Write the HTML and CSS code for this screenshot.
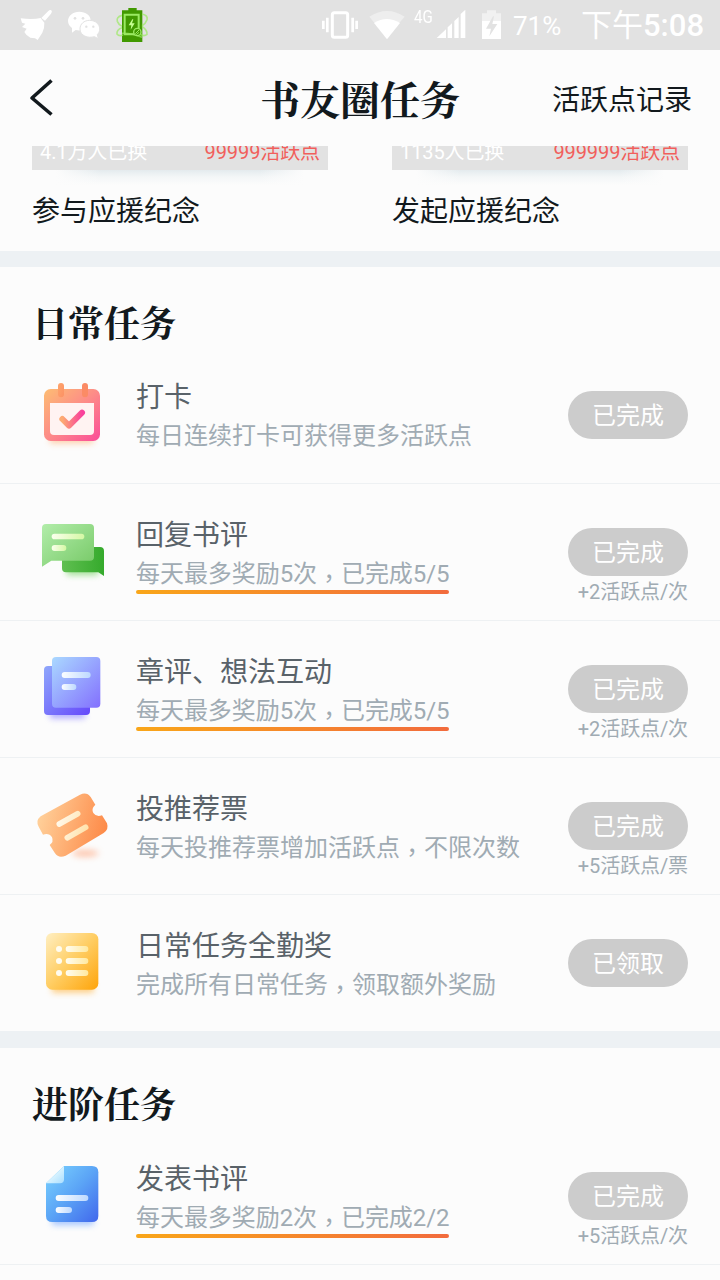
FILE: index.html
```html
<!DOCTYPE html>
<html lang="zh-CN">
<head>
<meta charset="utf-8">
<title>书友圈任务</title>
<link rel="stylesheet" href="styles.css">
</head>
<body>
<div class="status">
  <svg class="status-left" width="150" height="50" viewBox="0 0 450 150">
    <path d="M124 54L145 33q5-5 9-2q4 4-1 10L135 62z" fill="#fff"/>
    <path d="M62 55q36 5 60-1l11 14q1 16-6 30l-14 22-8-5-14-2-12-9-6-8 7-10-14-5 10-10-10-3z" fill="#fff"/>
    <g fill="#fff"><path d="M238 35c-19 0-34 12-34 28 0 9 5 16 12 21v14l11-8c21 5 45-6 45-28 0-16-15-27-34-27z"/><path d="M269 61c-17 0-29 11-29 26 0 20 24 29 43 23l12 6-3-12c16-15 5-43-23-43z" stroke="#e2e2e2" stroke-width="3"/></g>
    <g fill="#e2e2e2"><circle cx="225" cy="55" r="4"/><circle cx="249" cy="55" r="4"/><circle cx="259" cy="80" r="3.500"/><circle cx="280" cy="80" r="3.500"/></g>
    <path d="M385 24h25v7h17v95h-61V31h19z" fill="#419900"/>
    <g fill="none" stroke="#9bea62"><path d="M374 44h42v59h-42z" stroke-width="6"/><path d="M366 46q-18 5-14 18 4 10 14 15M366 83q-17 6-15 19 6 8 18 3" stroke-width="5" opacity=".7"/><path d="M426 42q19 4 15 17-4 12-15 18M426 79q17 12 15 24-9 8-22-1M366 100q25-2 60 12" stroke-width="5" opacity=".7"/></g>
    <path d="M397 58l-11 18h8l-2 13 12-19h-8l4-12z" fill="#c5ff91"/>
    <circle cx="412" cy="96" r="11" fill="#419900" stroke="#9bea62" stroke-width="4"/><path d="M406 101l11-11m-8 14l8-7" stroke="#9bea62" stroke-width="3"/>
  </svg>
  <svg class="status-right" width="210" height="50" viewBox="0 0 630 150">
    <rect x="97" y="38" width="46" height="74" rx="6" fill="none" stroke="#fff" stroke-width="9"/>
    <path d="M70 62v25M82 53v44M158 53v44M170 62v25" stroke="#fff" stroke-width="8"/>
    <path d="M208 50q53-34 106 0l-17 20q-36-20-73 0z" fill="#eee"/><path d="M222 69q38-24 78 0l-39 49z" fill="#fff"/>
    <g fill="#fff"><path d="M410 114l28-26v26z"/><path d="M443 82l13-12v44h-13zM463 63l13-12v63h-13zM482 42l14-13v85h-14z"/></g>
    <path d="M546 40h15v-9h27v9h15v23h-57z" fill="#f1f1f1"/><path d="M546 63h57v54h-57z" fill="#fff"/><path d="M579 49l-21 37h15l-5 23 24-37h-15l5-23z" fill="#e2e2e2"/>
  </svg>
  <span class="network">4G</span>
  <span class="battery">71%</span>
  <span class="clock">下午<b>5:08</b></span>
</div>

<header class="topbar">
  <svg class="back" width="30" height="40" viewBox="0 0 30 40"><path d="M26.500 2.500L7 20l19.500 16.500" fill="none" stroke="#12191d" stroke-width="3.600" stroke-linecap="butt" stroke-linejoin="round"/></svg>
  <h1>书友圈任务</h1>
  <span class="record">活跃点记录</span>
</header>

<section class="promos">
  <div class="promo"><div class="cover"><span>4.1万人已换</span><span class="price">99999活跃点</span></div><div class="shade"></div><p>参与应援纪念</p></div>
  <div class="promo"><div class="cover"><span>1135人已换</span><span class="price">999999活跃点</span></div><div class="shade"></div><p>发起应援纪念</p></div>
</section>

<section class="tasks">
  <h2>日常任务</h2>
  <div class="task first">
    <svg class="icon" viewBox="0 0 300 300">
      <defs>
        <filter id="soft" x="-30%" y="-100%" width="160%" height="300%"><feGaussianBlur stdDeviation="9"/></filter>
        <linearGradient id="cal" x1="0" y1="0" x2="1" y2="1"><stop stop-color="#fdbd72"/><stop offset=".5" stop-color="#fd8b88"/><stop offset="1" stop-color="#fb4b99"/></linearGradient>
        <linearGradient id="tick"><stop stop-color="#fdaa72"/><stop offset="1" stop-color="#f9409b"/></linearGradient>
        <linearGradient id="ring" x1="0" y1="0" x2="1" y2="1"><stop stop-color="#ffa56c"/><stop offset="1" stop-color="#fb9165"/></linearGradient>
      </defs>
      <g transform="translate(0 -6)">
        <rect x="90" y="205" width="130" height="30" fill="#ffb072" opacity=".6" filter="url(#soft)"/>
        <rect x="72" y="72" width="168" height="156" rx="20" fill="url(#cal)"/>
        <path d="M90 114h132v84q0 12-12 12H102q-12 0-12-12z" fill="#fff3f2"/>
        <rect x="114" y="54" width="18" height="43" rx="9" fill="url(#ring)"/><rect x="186" y="54" width="18" height="43" rx="9" fill="#fb8b65"/>
        <path d="M127 162l20 20 39-39" fill="none" stroke="url(#tick)" stroke-width="18" stroke-linecap="round" stroke-linejoin="round"/>
      </g>
    </svg>
    <div class="info"><h3>打卡</h3><p>每日连续打卡可获得更多活跃点</p></div>
    <div class="action"><span class="pill">已完成</span></div>
  </div>
  <div class="task">
    <svg class="icon" viewBox="0 0 300 300">
      <defs>
        <linearGradient id="chatBack"><stop stop-color="#60bf51"/><stop offset="1" stop-color="#35aa2c"/></linearGradient>
        <linearGradient id="chatFront" x1="0" y1="0" x2="1" y2="1"><stop stop-color="#b2edaa"/><stop offset="1" stop-color="#77c967"/></linearGradient>
        <linearGradient id="chatLine"><stop stop-color="#fbffed"/><stop offset="1" stop-color="#d4f8a4"/></linearGradient>
      </defs>
      <g transform="translate(0 3)">
        <rect x="140" y="187" width="95" height="23" fill="#69cf55" opacity=".65" filter="url(#soft)"/>
        <path d="M126 126h114q12 0 12 12v75l-17-11h-97q-12 0-12-12z" fill="url(#chatBack)"/>
        <path d="M78 57h132q12 0 12 12v86q0 12-12 12H94l-28 18V69q0-12 12-12z" fill="url(#chatFront)"/>
        <rect x="95" y="86" width="98" height="17" rx="8.500" fill="url(#chatLine)"/><rect x="95" y="120" width="44" height="18" rx="9" fill="url(#chatLine)"/>
      </g>
    </svg>
    <div class="info"><h3>回复书评</h3><p class="progress">每天最多奖励5次<i lang="zh-TW">，</i>已完成5/5</p></div>
    <div class="action"><span class="pill">已完成</span><small>+2活跃点/次</small></div>
  </div>
  <div class="task">
    <svg class="icon" viewBox="0 0 300 300">
      <defs>
        <linearGradient id="pageBack" x1="0" y1="0" x2="1" y2="1"><stop stop-color="#8fa7fb"/><stop offset="1" stop-color="#6548fb"/></linearGradient>
        <linearGradient id="pageFront" x1="0" y1="0" x2="1" y2="1"><stop stop-color="#aad9ff"/><stop offset="1" stop-color="#8370fe"/></linearGradient>
        <linearGradient id="pageLine"><stop stop-color="#fbfdff"/><stop offset="1" stop-color="#bdd9ff"/></linearGradient>
      </defs>
      <g transform="translate(0 -3)">
        <rect x="90" y="205" width="105" height="30" fill="#7e76ff" opacity=".6" filter="url(#soft)"/>
        <rect x="72" y="78" width="138" height="147" rx="12" fill="url(#pageBack)"/>
        <rect x="96" y="51" width="145" height="152" rx="12" fill="url(#pageFront)"/>
        <rect x="125" y="96" width="87" height="18" rx="9" fill="url(#pageLine)"/><rect x="125" y="132" width="44" height="18" rx="9" fill="url(#pageLine)"/>
      </g>
    </svg>
    <div class="info"><h3>章评、想法互动</h3><p class="progress">每天最多奖励5次<i lang="zh-TW">，</i>已完成5/5</p></div>
    <div class="action"><span class="pill">已完成</span><small>+2活跃点/次</small></div>
  </div>
  <div class="task">
    <svg class="icon" viewBox="0 0 300 300">
      <defs>
        <linearGradient id="ticket" gradientUnits="userSpaceOnUse" x1="55" y1="110" x2="262" y2="165"><stop stop-color="#ffd09a"/><stop offset="1" stop-color="#fd8846"/></linearGradient>
        <linearGradient id="ticketLine" gradientUnits="userSpaceOnUse" x1="110" y1="130" x2="205" y2="160"><stop stop-color="#fff9eb"/><stop offset="1" stop-color="#ffe1a8"/></linearGradient>
      </defs>
      <g transform="translate(0 6)">
        <ellipse cx="196" cy="220" rx="40" ry="10" fill="#ff8c58" opacity=".5" filter="url(#soft)"/>
        <path d="M62 109L180 44q20-9 32 7l14 23q-13 12-6 25 9 13 26 7l15 24q6 19-10 29L137 227q-21 9-32-7l-16-25q13-9 7-23-9-14-27-8l-13-24q-10-18 6-31z" fill="url(#ticket)"/>
        <path d="M118 132l55-31M142 173l55-31" stroke="url(#ticketLine)" stroke-width="17" stroke-linecap="round"/>
      </g>
    </svg>
    <div class="info"><h3>投推荐票</h3><p>每天投推荐票增加活跃点<i lang="zh-TW">，</i>不限次数</p></div>
    <div class="action"><span class="pill">已完成</span><small>+5活跃点/票</small></div>
  </div>
  <div class="task">
    <svg class="icon" viewBox="0 0 300 300">
      <defs>
        <linearGradient id="list" x1="0" y1="0" x2="1" y2="1"><stop stop-color="#ffefc2"/><stop offset=".5" stop-color="#ffcd62"/><stop offset="1" stop-color="#fea40a"/></linearGradient>
        <linearGradient id="listLine"><stop stop-color="#fffdf2"/><stop offset="1" stop-color="#ffe99f"/></linearGradient>
      </defs>
      <g transform="translate(0 15)">
        <rect x="96" y="188" width="125" height="30" fill="#ffb43c" opacity=".65" filter="url(#soft)"/>
        <rect x="78" y="39" width="157" height="170" rx="19" fill="url(#list)"/>
        <g fill="#fffcf0"><circle cx="117" cy="87" r="9"/><circle cx="117" cy="123" r="9"/><circle cx="117" cy="159" r="9"/></g>
        <g fill="url(#listLine)"><rect x="137" y="78" width="68" height="18" rx="9"/><rect x="137" y="114" width="68" height="18" rx="9"/><rect x="137" y="150" width="68" height="18" rx="9"/></g>
      </g>
    </svg>
    <div class="info"><h3>日常任务全勤奖</h3><p>完成所有日常任务<i lang="zh-TW">，</i>领取额外奖励</p></div>
    <div class="action"><span class="pill">已领取</span></div>
  </div>
</section>

<section class="tasks">
  <h2>进阶任务</h2>
  <div class="task">
    <svg class="icon" viewBox="0 0 300 300">
      <defs>
        <linearGradient id="doc" x1="0" y1="0" x2="1" y2="1"><stop stop-color="#7bd4ff"/><stop offset=".5" stop-color="#5ba4f6"/><stop offset="1" stop-color="#4167ec"/></linearGradient>
        <linearGradient id="fold" x1="0" y1="0" x2="1" y2="1"><stop offset=".4" stop-color="#e1f7ff"/><stop offset="1" stop-color="#a9deff"/></linearGradient>
      </defs>
      <g transform="translate(0 6)">
        <rect x="96" y="195" width="125" height="30" fill="#6ba0ff" opacity=".6" filter="url(#soft)"/>
        <path d="M132 48h84q19 0 19 19v131q0 18-19 18H97q-19 0-19-18v-98z" fill="url(#doc)"/>
        <path d="M132 48v40q0 12-12 12H78z" fill="url(#fold)"/>
        <g fill="url(#pageLine)"><rect x="107" y="135" width="98" height="18" rx="9"/><rect x="107" y="171" width="49" height="18" rx="9"/></g>
      </g>
    </svg>
    <div class="info"><h3>发表书评</h3><p class="progress">每天最多奖励2次<i lang="zh-TW">，</i>已完成2/2</p></div>
    <div class="action"><span class="pill">已完成</span><small>+5活跃点/次</small></div>
  </div>
</section>
</body>
</html>
```

FILE: styles.css
```css
* { box-sizing: border-box; margin: 0; padding: 0; }
body {
  width: 720px;
  height: 1280px;
  overflow: hidden;
  background: #fcfcfc;
  color: #12191d;
  font-family: Roboto, "Noto Sans CJK SC", sans-serif;
}
svg { display: block; flex: none; }
.status { position: relative; display: flex; height: 50px; background: #e2e2e2; color: #fff; }
.status-right { margin-left: 150px; }
.network {
  position: absolute;
  left: 414px;
  top: 7px;
  font-size: 18px;
  line-height: 20px;
  transform: scaleX(.84);
  transform-origin: 0 0;
}
.battery { width: 71px; padding-left: 3px; font-size: 26px; line-height: 52px; }
.clock { padding-top: 1px; font-size: 31px; line-height: 50px; white-space: nowrap; }
.clock b { font-weight: 500; }
.topbar {
  display: grid;
  grid-template-columns: 160px 1fr 160px;
  align-items: center;
  height: 96px;
  padding: 0 28px 0 25px;
}
h1, h2 { font-family: "Noto Serif CJK SC", "Source Han Serif SC", "Noto Sans CJK SC", serif; font-weight: 700; white-space: nowrap; }
h1 { padding-left: 3px; font-size: 40px; line-height: 60px; text-align: center; }
.record { padding-top: 6px; font-size: 28px; line-height: 40px; text-align: right; }
.promos { display: flex; gap: 64px; height: 121px; padding: 0 32px; border-bottom: 16px solid #edf1f4; }
.promo { width: 296px; }
.cover {
  display: flex;
  justify-content: space-between;
  align-items: flex-end;
  height: 24px;
  padding: 0 8px 3px;
  overflow: hidden;
  background: #e2e2e2;
  color: #fff;
  font-size: 20px;
  line-height: 30px;
  letter-spacing: -.1px;
}
.price { color: #f15f5c; }
.shade {
  height: 15px;
  margin: 0 24px;
  background:
    linear-gradient(90deg, #fcfcfc, transparent 18%, transparent 82%, #fcfcfc),
    linear-gradient(#e4ebee, #f3f6f7 45%, #fcfcfc);
}
.promo p { margin-top: 7px; font-size: 28px; line-height: 40px; }
.tasks + .tasks { margin-top: -1px; border-top: 17px solid #edf1f4; }
h2 { height: 80px; padding: 28px 32px 0; font-size: 36px; line-height: 54px; }
.task { display: flex; height: 137px; padding: 0 32px 0 20px; border-bottom: 1px solid #eef1f3; }
.icon { width: 100px; height: 100px; margin-top: 20px; }
.info { flex: 1; padding: 32px 0 0 16px; white-space: nowrap; }
.first .info { padding-top: 31px; }
h3 { color: #596269; font-size: 28px; line-height: 40px; font-weight: 400; }
.info p { width: max-content; color: #a0abb3; font-size: 24px; line-height: 36px; }
.info .progress { letter-spacing: -.06px; width: 313px; }
.info i { font-family: "Noto Sans CJK TC", sans-serif; font-style: normal; line-height: 0; vertical-align: -5px; }
.progress::after {
  content: "";
  display: block;
  height: 4px;
  margin-top: -2px;
  border-radius: 2px;
  background: linear-gradient(90deg, #f9a619, #f26b3d);
}
.action { display: flex; flex-direction: column; align-items: flex-end; padding-top: 44px; }
.pill { width: 120px; height: 48px; border-radius: 24px; background: #ccc; color: #fff; font-size: 24px; line-height: 50px; text-align: center; }
.action small { padding-top: 1px; color: #a0abb3; font-size: 20px; line-height: 30px; letter-spacing: -.1px; white-space: nowrap; }
```
